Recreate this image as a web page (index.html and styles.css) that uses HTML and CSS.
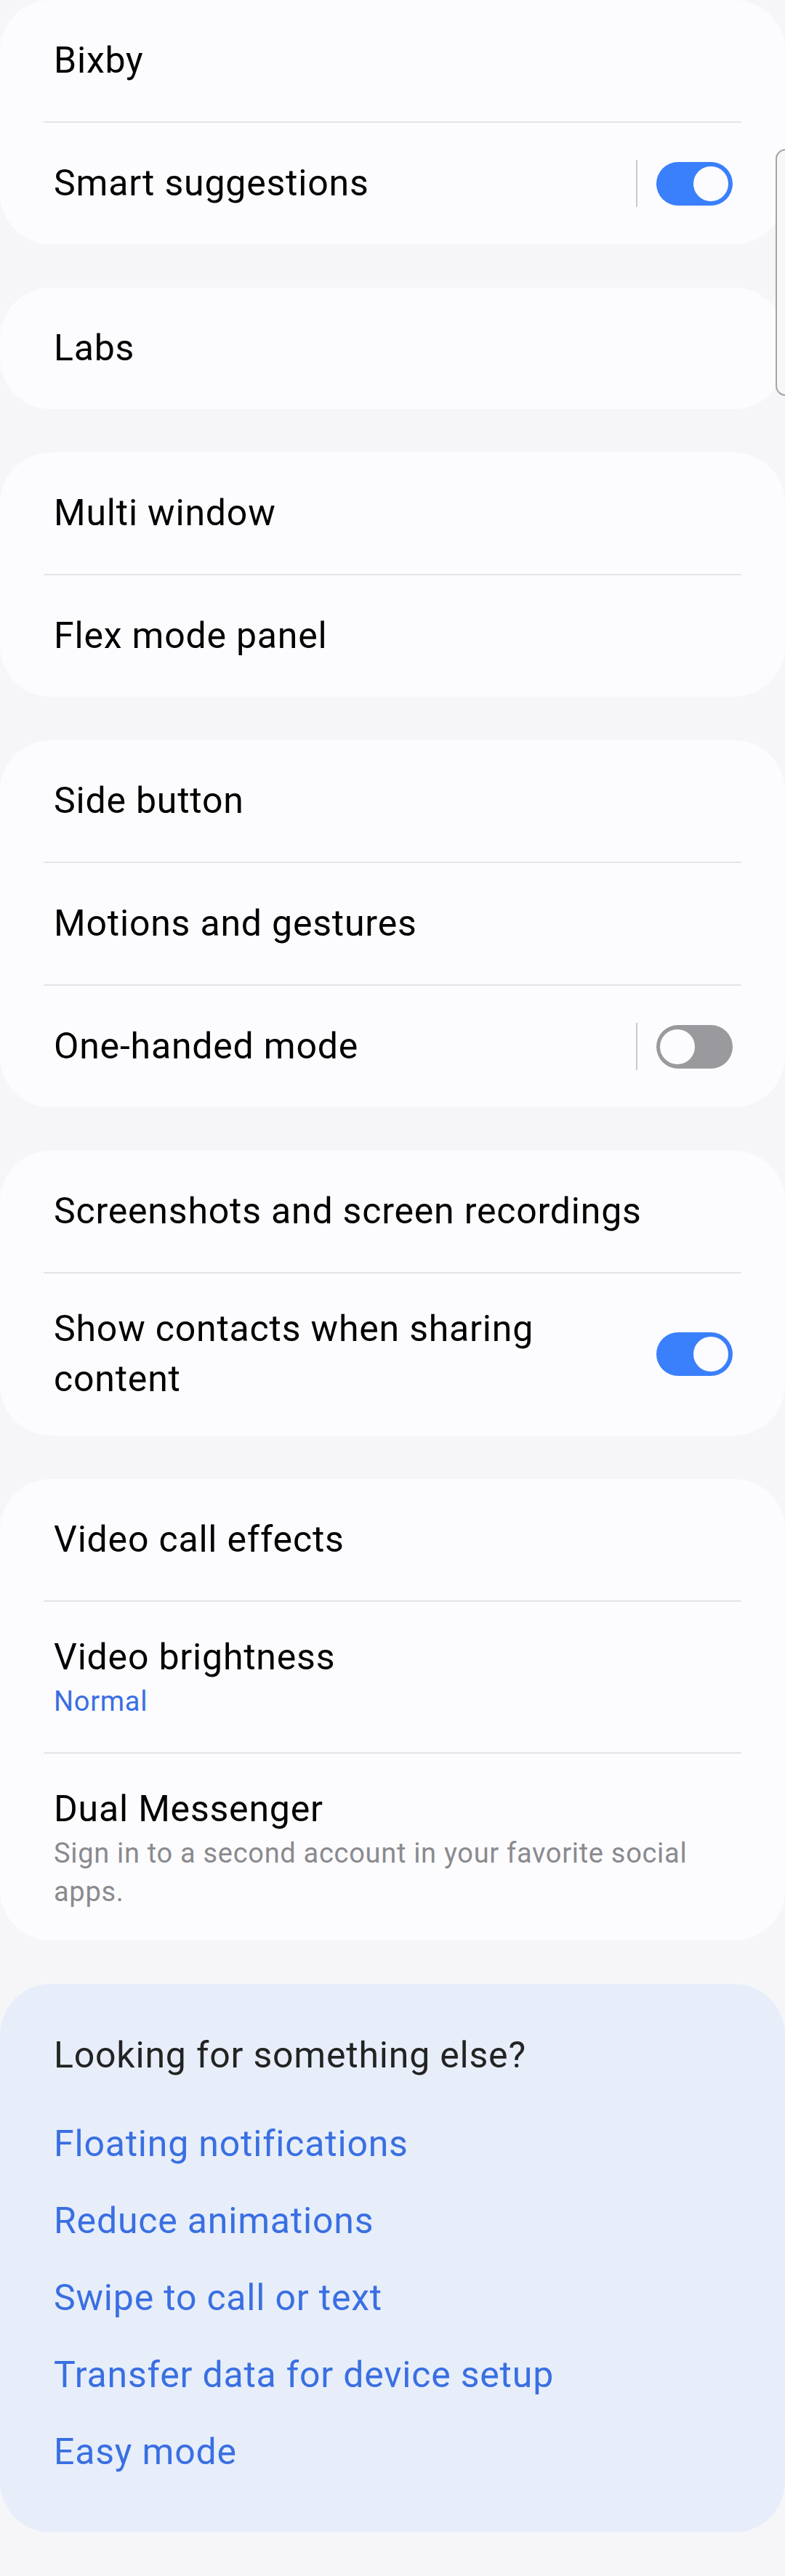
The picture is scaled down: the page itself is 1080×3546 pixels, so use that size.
FILE: index.html
```html
<!DOCTYPE html>
<html lang="en">
<head>
<meta charset="utf-8">
<title>Advanced features</title>
<link rel="stylesheet" href="styles.css">
</head>
<body>
<main class="page">
  <section class="card">
    <div class="row"><span class="title">Bixby</span></div>
    <div class="divider"></div>
    <div class="row">
      <span class="title">Smart suggestions</span>
      <div class="ctrl"><span class="vsep"></span><span class="switch on"></span></div>
    </div>
  </section>

  <section class="card">
    <div class="row"><span class="title">Labs</span></div>
  </section>

  <section class="card">
    <div class="row"><span class="title">Multi window</span></div>
    <div class="divider"></div>
    <div class="row"><span class="title">Flex mode panel</span></div>
  </section>

  <section class="card">
    <div class="row"><span class="title">Side button</span></div>
    <div class="divider"></div>
    <div class="row"><span class="title">Motions and gestures</span></div>
    <div class="divider"></div>
    <div class="row">
      <span class="title">One-handed mode</span>
      <div class="ctrl"><span class="vsep"></span><span class="switch off"></span></div>
    </div>
  </section>

  <section class="card">
    <div class="row"><span class="title">Screenshots and screen recordings</span></div>
    <div class="divider"></div>
    <div class="row multi">
      <span class="title">Show contacts when sharing content</span>
      <div class="ctrl"><span class="switch on"></span></div>
    </div>
  </section>

  <section class="card">
    <div class="row"><span class="title">Video call effects</span></div>
    <div class="divider"></div>
    <div class="row multi">
      <div class="text">
        <span class="title">Video brightness</span>
        <span class="sub blue">Normal</span>
      </div>
    </div>
    <div class="divider"></div>
    <div class="row multi last">
      <div class="text">
        <span class="title">Dual Messenger</span>
        <span class="sub grey">Sign in to a second account in your favorite social apps.</span>
      </div>
    </div>
  </section>

  <section class="info">
    <h2 class="info-head">Looking for something else?</h2>
    <ul class="links">
      <li class="link">Floating notifications</li>
      <li class="link">Reduce animations</li>
      <li class="link">Swipe to call or text</li>
      <li class="link">Transfer data for device setup</li>
      <li class="link">Easy mode</li>
    </ul>
  </section>
</main>
<div class="scrollbar"></div>
</body>
</html>
```

FILE: styles.css
```css
html {
  background: #f6f6f8;
}

body {
  margin: 0;
  min-height: 3546px;
  background: #f6f6f8;
  font-family: Roboto, "Noto Sans", sans-serif;
  color: #000;
  position: relative;
}

.page {
  display: flex;
  flex-direction: column;
  gap: 60px;
  padding: 0 0 60px 0;
}

.card {
  background: #fcfcfe;
  border-radius: 70px;
  display: flex;
  flex-direction: column;
}

.row {
  display: flex;
  align-items: center;
  min-height: 167px;
  padding: 0 72px 0 74px;
  box-sizing: border-box;
}

.row.multi {
  padding-top: 42px;
  padding-bottom: 43px;
  min-height: 0;
}

.row.multi.last {
  padding-bottom: 40px;
}

.title {
  font-size: 50px;
  line-height: 69px;
  letter-spacing: 0.8px;
  color: #000;
  flex: 1 1 auto;
}

.text {
  display: flex;
  flex-direction: column;
  flex: 1 1 auto;
}

.sub {
  font-size: 38px;
  line-height: 53px;
  letter-spacing: 0.7px;
}

.sub.blue {
  color: #3a6fe2;
}

.sub.grey {
  color: #8a8a8f;
}

.divider {
  height: 2px;
  background: #e4e4e6;
  margin: 0 60px;
}

.ctrl {
  display: flex;
  align-items: center;
  flex: 0 0 auto;
  margin-left: auto;
  padding-left: 30px;
}

.vsep {
  width: 2px;
  height: 65px;
  background: #c9c9cb;
  margin-right: 26px;
}

.switch {
  width: 105px;
  height: 60px;
  border-radius: 30px;
  position: relative;
  display: block;
}

.switch::after {
  content: "";
  position: absolute;
  top: 6px;
  width: 48px;
  height: 48px;
  border-radius: 50%;
  background: #fcfcfe;
}

.switch.on {
  background: #3a7ffb;
}

.switch.on::after {
  right: 6px;
}

.switch.off {
  background: #9a9a9e;
}

.switch.off::after {
  left: 5px;
}

.info {
  background: #e7eefa;
  border-radius: 70px;
  padding: 64px 74px 58px 74px;
}

.info-head {
  margin: 0;
  font-size: 50px;
  line-height: 69px;
  letter-spacing: 0.8px;
  font-weight: 400;
  color: #232323;
}

.links {
  list-style: none;
  margin: 34px 0 0 0;
  padding: 0;
}

.link {
  font-size: 50px;
  line-height: 69px;
  letter-spacing: 0.8px;
  padding: 18.5px 0;
  color: #3a6fe2;
}

.scrollbar {
  position: absolute;
  top: 205px;
  left: 1067px;
  width: 30px;
  height: 340px;
  box-sizing: border-box;
  border: 2px solid #a4a4a6;
  border-radius: 14px;
  background: #f7f7f7;
}
```
